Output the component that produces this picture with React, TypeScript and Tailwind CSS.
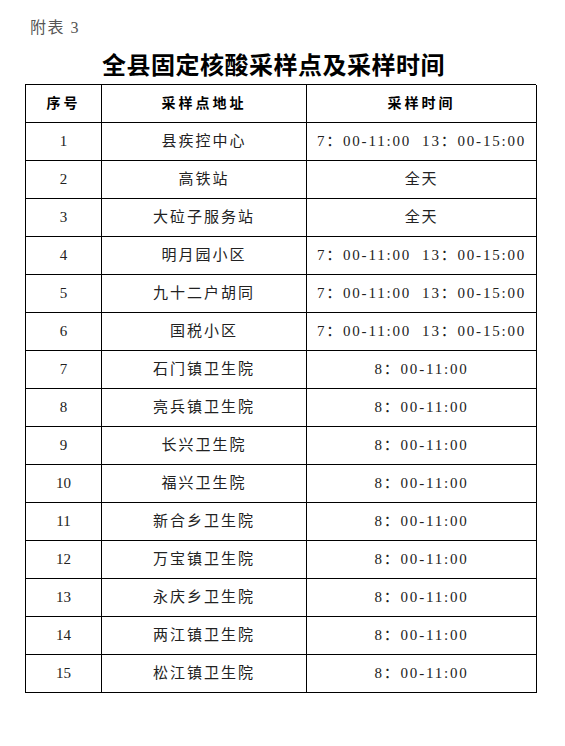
const rows = [
  ["1", "县疾控中心", "7：00-11:00  13：00-15:00"],
  ["2", "高铁站", "全天"],
  ["3", "大砬子服务站", "全天"],
  ["4", "明月园小区", "7：00-11:00  13：00-15:00"],
  ["5", "九十二户胡同", "7：00-11:00  13：00-15:00"],
  ["6", "国税小区", "7：00-11:00  13：00-15:00"],
  ["7", "石门镇卫生院", "8：00-11:00"],
  ["8", "亮兵镇卫生院", "8：00-11:00"],
  ["9", "长兴卫生院", "8：00-11:00"],
  ["10", "福兴卫生院", "8：00-11:00"],
  ["11", "新合乡卫生院", "8：00-11:00"],
  ["12", "万宝镇卫生院", "8：00-11:00"],
  ["13", "永庆乡卫生院", "8：00-11:00"],
  ["14", "两江镇卫生院", "8：00-11:00"],
  ["15", "松江镇卫生院", "8：00-11:00"],
];

const cell =
  "h-[38px] flex items-center justify-center border-r border-b border-black";

export default function App() {
  return (
    <div
      className="w-[565px] h-[746px] bg-white text-[#222]"
      style={{ fontFamily: '"Liberation Serif", "Noto Sans CJK SC", serif' }}
    >
      <div className="pt-[19px] pl-[30px] text-[16px] leading-[18px] text-[#555] tracking-[1.5px]">
        附表 3
      </div>

      <h1 className="mt-[14px] pr-[18px] text-center text-[24px] leading-[30px] font-bold text-black tracking-[0.5px]">
        全县固定核酸采样点及采样时间
      </h1>

      <div className="mt-[3px] ml-[25px] w-[511px] grid grid-cols-[76px_205px_230px] border-l border-t border-black">
        <div className={`${cell} text-[14px] font-bold text-black tracking-[3px]`}>序号</div>
        <div className={`${cell} text-[14px] font-bold text-black tracking-[3px]`}>采样点地址</div>
        <div className={`${cell} text-[14px] font-bold text-black tracking-[3px]`}>采样时间</div>

        {rows.map((r) => (
          <div key={r[0]} className="contents">
            <div className={`${cell} text-[15px]`}>{r[0]}</div>
            <div className={`${cell} text-[15px] tracking-[2px]`}>{r[1]}</div>
            <div className={`${cell} text-[15px] tracking-[1.8px] whitespace-pre`}>{r[2]}</div>
          </div>
        ))}
      </div>
    </div>
  );
}
